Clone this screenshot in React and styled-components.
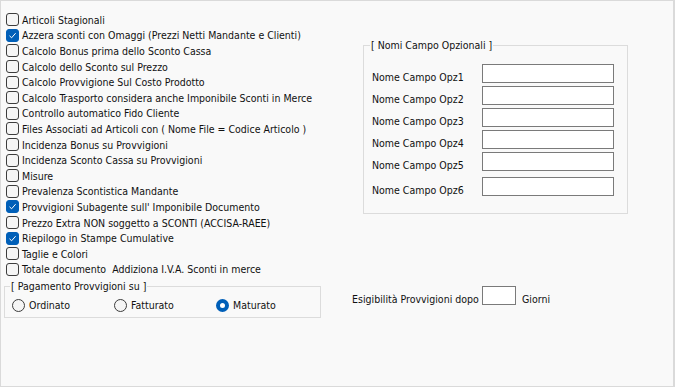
import React from 'react';
import styled, { createGlobalStyle } from 'styled-components';

const GlobalStyle = createGlobalStyle`
  html, body {
    margin: 0;
    padding: 0;
    background: #f9f9f9;
  }
  body {
    font-family: "DejaVu Sans Condensed", "DejaVu Sans", Tahoma, sans-serif;
    font-size: 10.5px;
    color: #111;
  }
`;

const options = [
  { label: 'Articoli Stagionali', checked: false },
  { label: 'Azzera sconti con Omaggi (Prezzi Netti Mandante e Clienti)', checked: true },
  { label: 'Calcolo Bonus prima dello Sconto Cassa', checked: false },
  { label: 'Calcolo dello Sconto sul Prezzo', checked: false },
  { label: 'Calcolo Provvigione Sul Costo Prodotto', checked: false },
  { label: 'Calcolo Trasporto considera anche Imponibile Sconti in Merce', checked: false },
  { label: 'Controllo automatico Fido Cliente', checked: false },
  { label: 'Files Associati ad Articoli con ( Nome File = Codice Articolo )', checked: false },
  { label: 'Incidenza Bonus su Provvigioni', checked: false },
  { label: 'Incidenza Sconto Cassa su Provvigioni', checked: false },
  { label: 'Misure', checked: false },
  { label: 'Prevalenza Scontistica Mandante', checked: false },
  { label: "Provvigioni Subagente sull' Imponibile Documento", checked: true },
  { label: 'Prezzo Extra NON soggetto a SCONTI (ACCISA-RAEE)', checked: false },
  { label: 'Riepilogo in Stampe Cumulative', checked: true },
  { label: 'Taglie e Colori', checked: false },
  { label: 'Totale documento  Addiziona I.V.A. Sconti in merce', checked: false },
];

const payments = [
  { label: 'Ordinato', checked: false },
  { label: 'Fatturato', checked: false },
  { label: 'Maturato', checked: true },
];

const Panel = styled.div`
  box-sizing: border-box;
  width: 675px;
  height: 387px;
  border: 1px solid #dadada;
  border-right-width: 2px;
  display: flex;
  background: #f9f9f9;
`;

const LeftColumn = styled.div`
  width: 351px;
  padding: 11px 0 0 3px;
  box-sizing: border-box;
`;

const RightColumn = styled.div`
  padding-top: 38px;
  flex: 1;
`;

const CheckList = styled.div`
  display: flex;
  flex-direction: column;
`;

const CheckRow = styled.label`
  height: 15.6px;
  display: flex;
  align-items: center;
  gap: 3px;
  padding-left: 2px;
  white-space: pre;
`;

const Box = styled.span`
  box-sizing: border-box;
  width: 13px;
  height: 13px;
  border-radius: 3px;
  border: 1px solid ${(p) => (p.$checked ? '#005fb8' : '#3c3c3c')};
  background: ${(p) => (p.$checked ? '#005fb8' : '#f5f5f5')};
  display: flex;
  align-items: center;
  justify-content: center;
  flex-shrink: 0;
`;

const Frame = styled.fieldset`
  margin: 0;
  border: 1px solid #dcdcdc;
  padding: ${(p) => p.$pad};
  width: ${(p) => p.$width};
  box-sizing: border-box;
`;

const PaymentFrame = styled(Frame)`
  margin-top: 3px;
`;

const OptionalFrame = styled(Frame)`
  margin-left: 11px;
`;

const Legend = styled.legend`
  padding: 0 1px;
  margin-left: -2px;
  line-height: 13px;
`;

const RadioRow = styled.div`
  display: grid;
  grid-template-columns: repeat(3, 102px);
`;

const RadioItem = styled.label`
  display: flex;
  align-items: center;
  gap: 4px;
  height: 16px;
`;

const Circle = styled.span`
  box-sizing: border-box;
  width: 13px;
  height: 13px;
  border-radius: 50%;
  border: ${(p) => (p.$checked ? '4px solid #005fb8' : '1px solid #3c3c3c')};
  background: ${(p) => (p.$checked ? '#fff' : '#f5f5f5')};
  flex-shrink: 0;
`;

const FieldGrid = styled.div`
  display: flex;
  flex-direction: column;
`;

const FieldRow = styled.div`
  display: flex;
  align-items: center;
  height: 22px;
  margin-top: ${(p) => (p.$extra ? '3px' : '0')};
`;

const FieldLabel = styled.span`
  width: ${(p) => p.$width || '110px'};
  padding-top: 8px;
  line-height: 13px;
  flex-shrink: 0;
`;

const TextBox = styled.div`
  box-sizing: border-box;
  width: ${(p) => p.$width};
  height: 19px;
  border: 1px solid #7a7a7a;
  background: #fff;
`;

const DaysRow = styled.div`
  display: flex;
  align-items: center;
  margin-top: 71px;
`;

const Unit = styled.span`
  padding: 7px 0 0 6px;
  line-height: 13px;
`;

const Check = () => (
  <svg width="9" height="9" viewBox="0 0 9 9">
    <path d="M1.5 4.8 L3.6 6.8 L7.6 2.2" fill="none" stroke="#fff" strokeWidth="1" />
  </svg>
);

export default function App() {
  return (
    <>
      <GlobalStyle />
      <Panel>
        <LeftColumn>
          <CheckList>
            {options.map((o) => (
              <CheckRow key={o.label}>
                <Box $checked={o.checked}>{o.checked && <Check />}</Box>
                {o.label}
              </CheckRow>
            ))}
          </CheckList>
          <PaymentFrame $pad="4px 0 4px 7px" $width="317px">
            <Legend>[ Pagamento Provvigioni su ]</Legend>
            <RadioRow>
              {payments.map((r) => (
                <RadioItem key={r.label}>
                  <Circle $checked={r.checked} />
                  {r.label}
                </RadioItem>
              ))}
            </RadioRow>
          </PaymentFrame>
        </LeftColumn>
        <RightColumn>
          <OptionalFrame $pad="10px 0 16px 8px" $width="265px">
            <Legend>[ Nomi Campo Opzionali ]</Legend>
            <FieldGrid>
              {[1, 2, 3, 4, 5, 6].map((n) => (
                <FieldRow key={n} $extra={n === 6}>
                  <FieldLabel>Nome Campo Opz{n}</FieldLabel>
                  <TextBox $width="132px" />
                </FieldRow>
              ))}
            </FieldGrid>
          </OptionalFrame>
          <DaysRow>
            <FieldLabel $width="130px">Esigibilità Provvigioni dopo</FieldLabel>
            <TextBox $width="34px" />
            <Unit>Giorni</Unit>
          </DaysRow>
        </RightColumn>
      </Panel>
    </>
  );
}
